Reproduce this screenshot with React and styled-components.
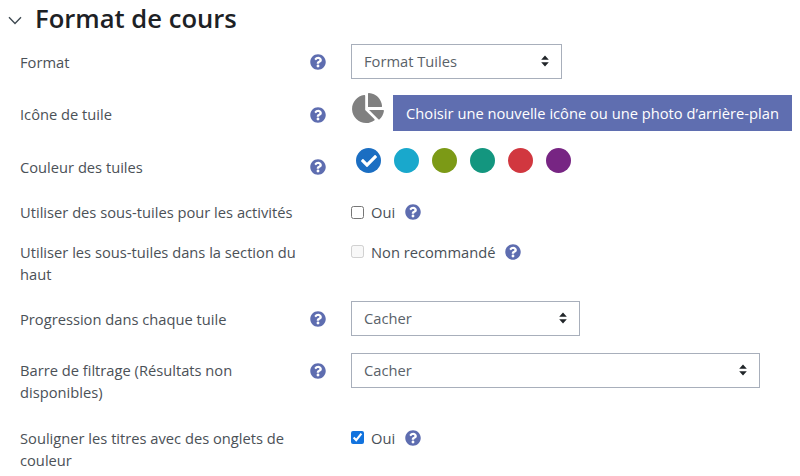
import React from "react";
import styled, { createGlobalStyle } from "styled-components";
import { FaQuestionCircle, FaChartPie, FaCheck } from "react-icons/fa";

const Global = createGlobalStyle`
  html, body { margin: 0; padding: 0; background: #fff; }
  body { font-family: "Open Sans", "Liberation Sans", sans-serif; color: #495057; font-size: 14.7px; line-height: 22px; }
`;

const Page = styled.div`
  width: 800px;
  height: 476px;
  overflow: hidden;
  box-sizing: border-box;
  padding-top: 3px;
`;

const Heading = styled.h3`
  display: flex;
  align-items: center;
  margin: 0 0 ${p => p.$gap}px;
  padding-left: 8px;
  height: 32px;
  font-size: 25.6px;
  font-weight: 600;
  color: #1d2125;
  line-height: 32px;
`;

const Chevron = styled.svg`
  width: 14px;
  height: 9px;
  margin-right: 13px;
  margin-top: 2px;
  flex: none;
`;

const Row = styled.div`
  display: grid;
  grid-template-columns: 290px 41px 1fr;
  padding-left: 20px;
  align-items: ${p => (p.$top ? "start" : "center")};
  margin-bottom: ${p => p.$gap || 0}px;
`;

const Label = styled.div`
  line-height: 22px;
  color: #4b5157;
  padding-right: 4px;
  margin-top: ${p => p.$top || 0}px;
`;

const HelpIcon = styled(FaQuestionCircle)`
  width: 16px;
  height: 16px;
  color: #5e6db0;
  display: block;
`;

const HelpCell = styled.div`
  margin-top: ${p => p.$top || 0}px;
`;

const Select = styled.div`
  box-sizing: border-box;
  width: ${p => p.$width}px;
  height: 35px;
  display: flex;
  align-items: center;
  justify-content: space-between;
  padding: 0 12px 1px 12px;
  border: 1px solid #a8afbb;
  background: #fff;
  color: #5a6269;
`;

const Caret = styled.svg`
  width: 8px;
  height: 12px;
  flex: none;
`;

const IconRow = styled.div`
  display: flex;
  align-items: flex-start;
  gap: 9px;
`;

const Pie = styled(FaChartPie)`
  width: 32px;
  height: 30px;
  margin-left: 1px;
  margin-top: -1px;
  color: #808080;
  flex: none;
`;

const PrimaryButton = styled.button`
  box-sizing: border-box;
  width: 399px;
  height: 36px;
  margin-top: 1px;
  padding: 0;
  border: 0;
  background: #5f6eb0;
  color: #fff;
  font: inherit;
`;

const Swatches = styled.div`
  display: flex;
  gap: 13px;
  padding-left: 5px;
`;

const Swatch = styled.div`
  width: 25px;
  height: 25px;
  border-radius: 50%;
  background: ${p => p.$color};
  color: #fff;
  display: flex;
  align-items: center;
  justify-content: center;
`;

const CheckLine = styled.label`
  display: flex;
  align-items: center;
  height: 21px;
`;

const Box = styled.input`
  width: 13px;
  height: 13px;
  margin: 0 7px 0 0;
  accent-color: #1273de;
`;

const InlineHelp = styled.span`
  margin-left: 10px;
`;

const colors = ["#1b6ec2", "#19a8cc", "#7c9a16", "#13967f", "#d1373f", "#772583"];

const Help = ({ top }) => (
  <HelpCell $top={top}>
    <HelpIcon />
  </HelpCell>
);

const Check = ({ text, checked, disabled }) => (
  <CheckLine>
    <Box type="checkbox" defaultChecked={checked} disabled={disabled} />
    {text}
    <InlineHelp>
      <HelpIcon />
    </InlineHelp>
  </CheckLine>
);

const Dropdown = ({ width, text }) => (
  <Select $width={width}>
    {text}
    <Caret viewBox="0 0 8 12">
      <path d="M4 0.5 L7.8 4.8 H0.2 Z M4 11.5 L7.8 7.2 H0.2 Z" fill="#212529" />
    </Caret>
  </Select>
);

export default function App() {
  return (
    <Page>
      <Global />
      <Heading $gap={9}>
        <Chevron viewBox="0 0 14 9">
          <path d="M1 1.2 L7 7.4 L13 1.2" fill="none" stroke="#3f4a52" strokeWidth="1.4" />
        </Chevron>
        Format de cours
      </Heading>

      <Row $gap={15}>
        <Label>Format</Label>
        <Help />
        <Dropdown width={211} text="Format Tuiles" />
      </Row>

      <Row $gap={17}>
        <Label $top={2}>Icône de tuile</Label>
        <Help top={4} />
        <IconRow>
          <Pie />
          <PrimaryButton>Choisir une nouvelle icône ou une photo d’arrière-plan</PrimaryButton>
        </IconRow>
      </Row>

      <Row $top $gap={23}>
        <Label $top={8}>Couleur des tuiles</Label>
        <Help top={11} />
        <Swatches>
          {colors.map((c, i) => (
            <Swatch key={c} $color={c}>
              {i === 0 && <FaCheck size={16} />}
            </Swatch>
          ))}
        </Swatches>
      </Row>

      <Row $gap={18}>
        <Label>Utiliser des sous-tuiles pour les activités</Label>
        <span />
        <Check text="Oui" />
      </Row>

      <Row $top $gap={16}>
        <Label>Utiliser les sous-tuiles dans la section du haut</Label>
        <span />
        <Check text="Non recommandé" disabled />
      </Row>

      <Row $gap={17}>
        <Label>Progression dans chaque tuile</Label>
        <Help />
        <Dropdown width={229} text="Cacher" />
      </Row>

      <Row $top $gap={24}>
        <Label $top={6}>Barre de filtrage (Résultats non disponibles)</Label>
        <Help top={10} />
        <Dropdown width={409} text="Cacher" />
      </Row>

      <Row $top>
        <Label>Souligner les titres avec des onglets de couleur</Label>
        <span />
        <Check text="Oui" checked />
      </Row>
    </Page>
  );
}
